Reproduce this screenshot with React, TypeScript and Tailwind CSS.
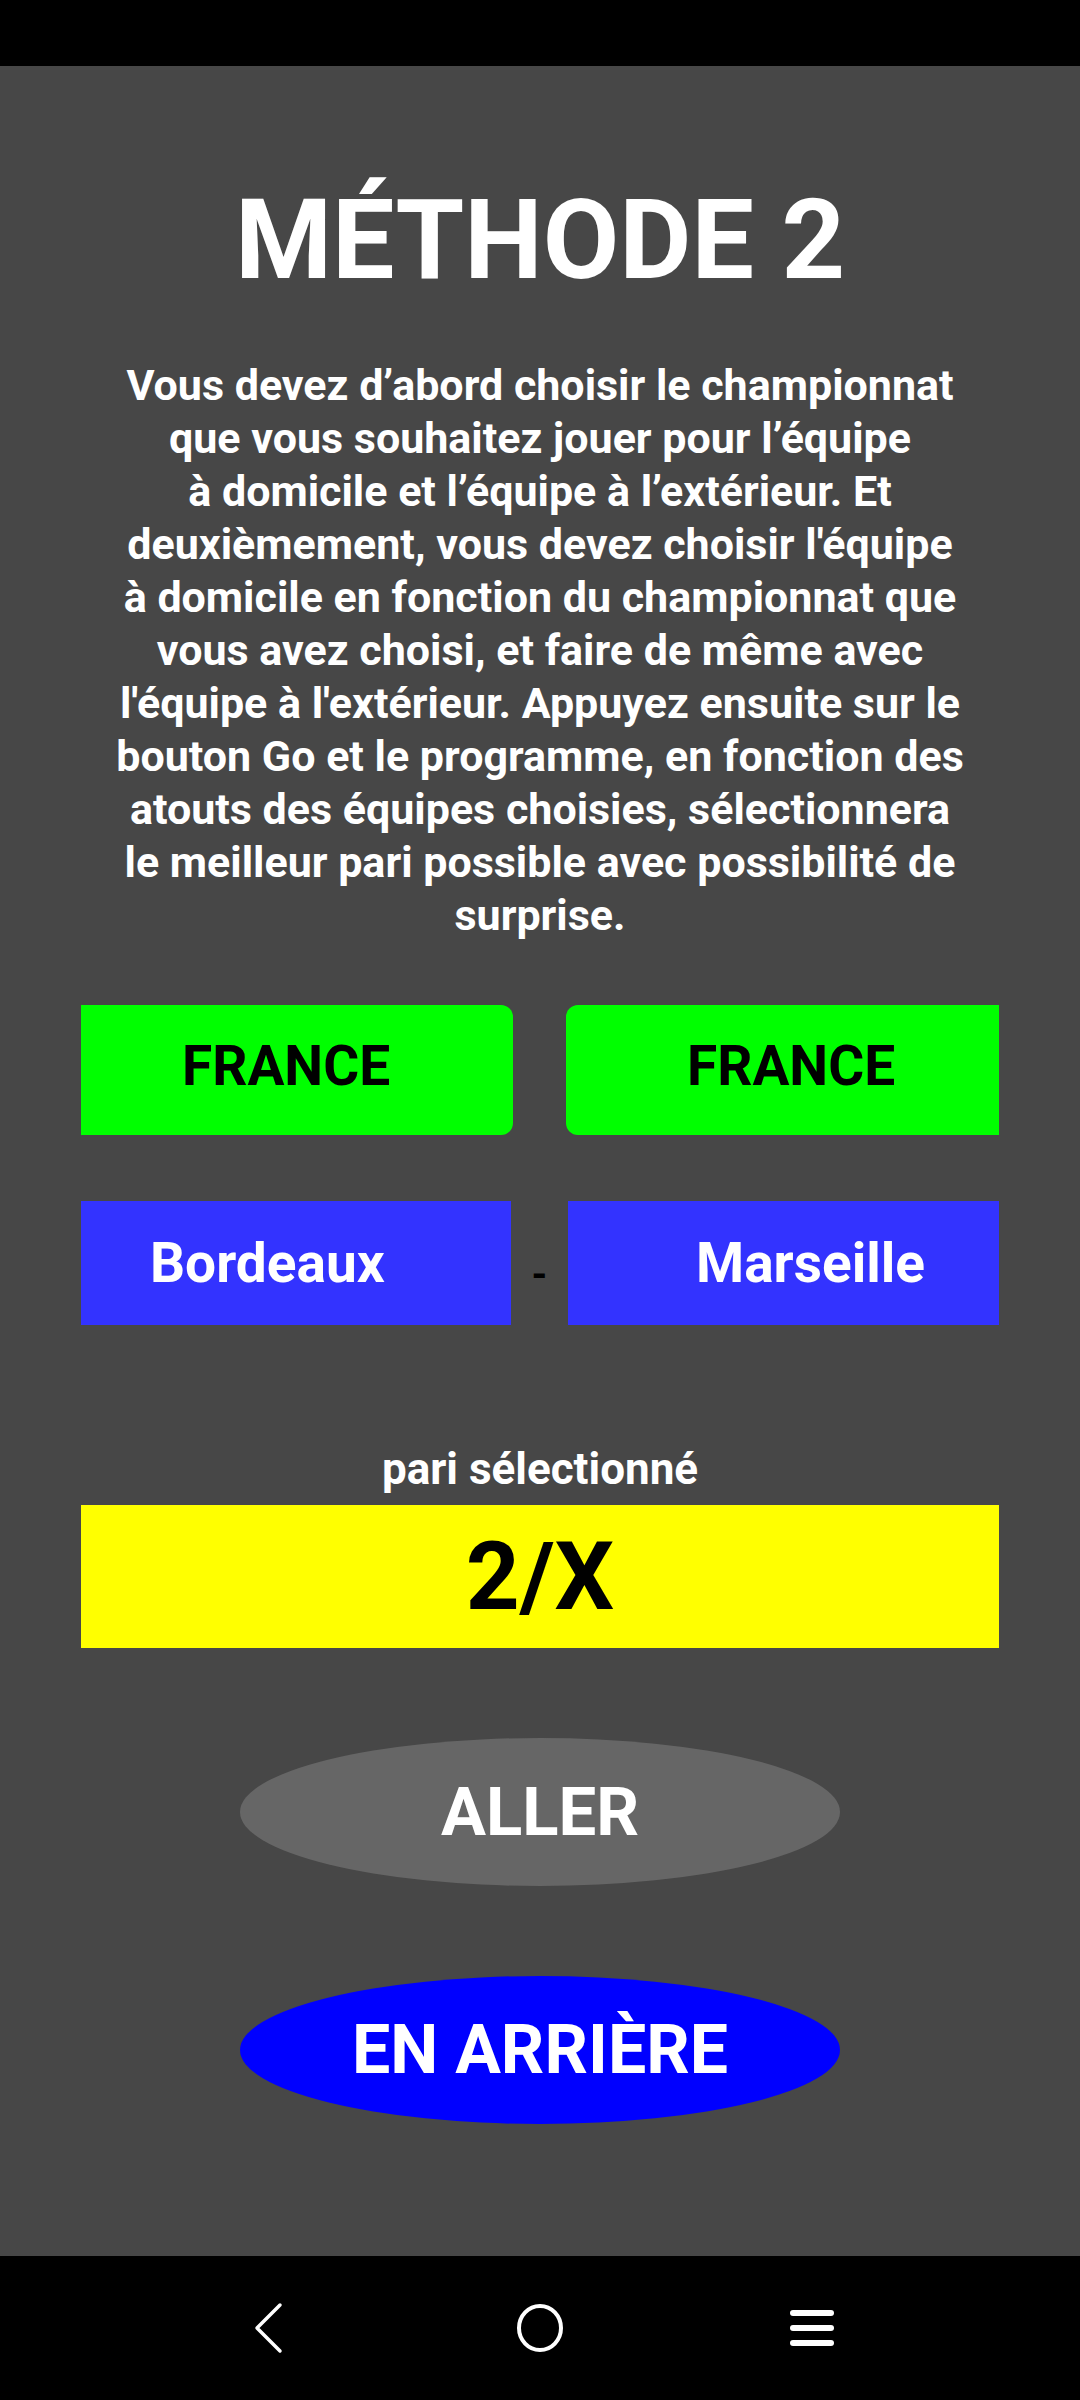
const lines = [
  'Vous devez d’abord choisir le championnat',
  'que vous souhaitez jouer pour l’équipe',
  'à domicile et l’équipe à l’extérieur. Et',
  "deuxièmement, vous devez choisir l'équipe",
  'à domicile en fonction du championnat que',
  'vous avez choisi, et faire de même avec',
  "l'équipe à l'extérieur. Appuyez ensuite sur le",
  'bouton Go et le programme, en fonction des',
  'atouts des équipes choisies, sélectionnera',
  'le meilleur pari possible avec possibilité de',
  'surprise.',
];

const App = () => {
  return (
    <div className="w-[1080px] h-[2400px] flex flex-col font-['Roboto',sans-serif]">
      {/* status bar */}
      <div className="h-[66px] bg-black" />

      <div className="flex-1 bg-[#474747] flex flex-col items-center">
        <h1 className="mt-[119px] text-[111px] leading-none font-bold text-white">
          MÉTHODE 2
        </h1>

        <p className="mt-[63px] text-[43px] leading-[53px] font-bold text-white text-center whitespace-nowrap">
          {lines.map((l, i) => (
            <span key={i} className="block">
              {l}
            </span>
          ))}
        </p>

        {/* championnats */}
        <div className="mt-[63px] w-full px-[81px] flex justify-between">
          <div className="w-[432px] h-[130px] bg-[#00ff00] rounded-r-[12px] flex items-center pl-[101px] pb-[8px]">
            <span className="text-[55px] font-bold text-black">FRANCE</span>
          </div>
          <div className="w-[433px] h-[130px] bg-[#00ff00] rounded-l-[12px] flex items-center pl-[121px] pb-[8px]">
            <span className="text-[55px] font-bold text-black">FRANCE</span>
          </div>
        </div>

        {/* equipes */}
        <div className="mt-[66px] w-full px-[81px] flex">
          <div className="w-[430px] h-[124px] bg-[#3333ff] flex items-center pl-[69px]">
            <span className="text-[55px] font-bold text-white">Bordeaux</span>
          </div>
          <div className="w-[57px] flex items-center justify-center pt-[24px]">
            <span className="text-[40px] font-bold text-black">-</span>
          </div>
          <div className="w-[431px] h-[124px] bg-[#3333ff] flex items-center pl-[128px]">
            <span className="text-[55px] font-bold text-white">Marseille</span>
          </div>
        </div>

        <div className="mt-[122px] text-[44px] leading-none font-bold text-white">
          pari sélectionné
        </div>

        <div className="mt-[14px] w-[918px] h-[143px] bg-[#ffff00] flex items-center justify-center">
          <span className="text-[94px] leading-none font-bold text-black">2/X</span>
        </div>

        <button className="mt-[90px] w-[600px] h-[148px] rounded-[50%] bg-[#666666] flex items-center justify-center">
          <span className="text-[67px] leading-none font-bold text-white">ALLER</span>
        </button>

        <button className="mt-[90px] w-[600px] h-[148px] rounded-[50%] bg-[#0000ff] flex items-center justify-center">
          <span className="text-[68px] leading-none font-bold text-white">EN ARRIÈRE</span>
        </button>
      </div>

      {/* navigation bar */}
      <div className="h-[144px] bg-black flex items-center justify-center">
        <div className="w-[272px] flex justify-center">
          <svg width="30" height="52" viewBox="0 0 30 52">
            <polyline
              points="27,3 4,26 27,49"
              fill="none"
              stroke="white"
              strokeWidth="3.5"
              strokeLinecap="round"
              strokeLinejoin="round"
            />
          </svg>
        </div>
        <div className="w-[272px] flex justify-center">
          <svg width="50" height="52" viewBox="0 0 50 52">
            <ellipse cx="25" cy="26" rx="21" ry="22" fill="none" stroke="white" strokeWidth="4" />
          </svg>
        </div>
        <div className="w-[272px] flex justify-center">
          <div className="w-[44px] flex flex-col gap-[9px]">
            <div className="h-[6px] rounded-full bg-white" />
            <div className="h-[6px] rounded-full bg-white" />
            <div className="h-[6px] rounded-full bg-white" />
          </div>
        </div>
      </div>
    </div>
  );
};

export default App;
